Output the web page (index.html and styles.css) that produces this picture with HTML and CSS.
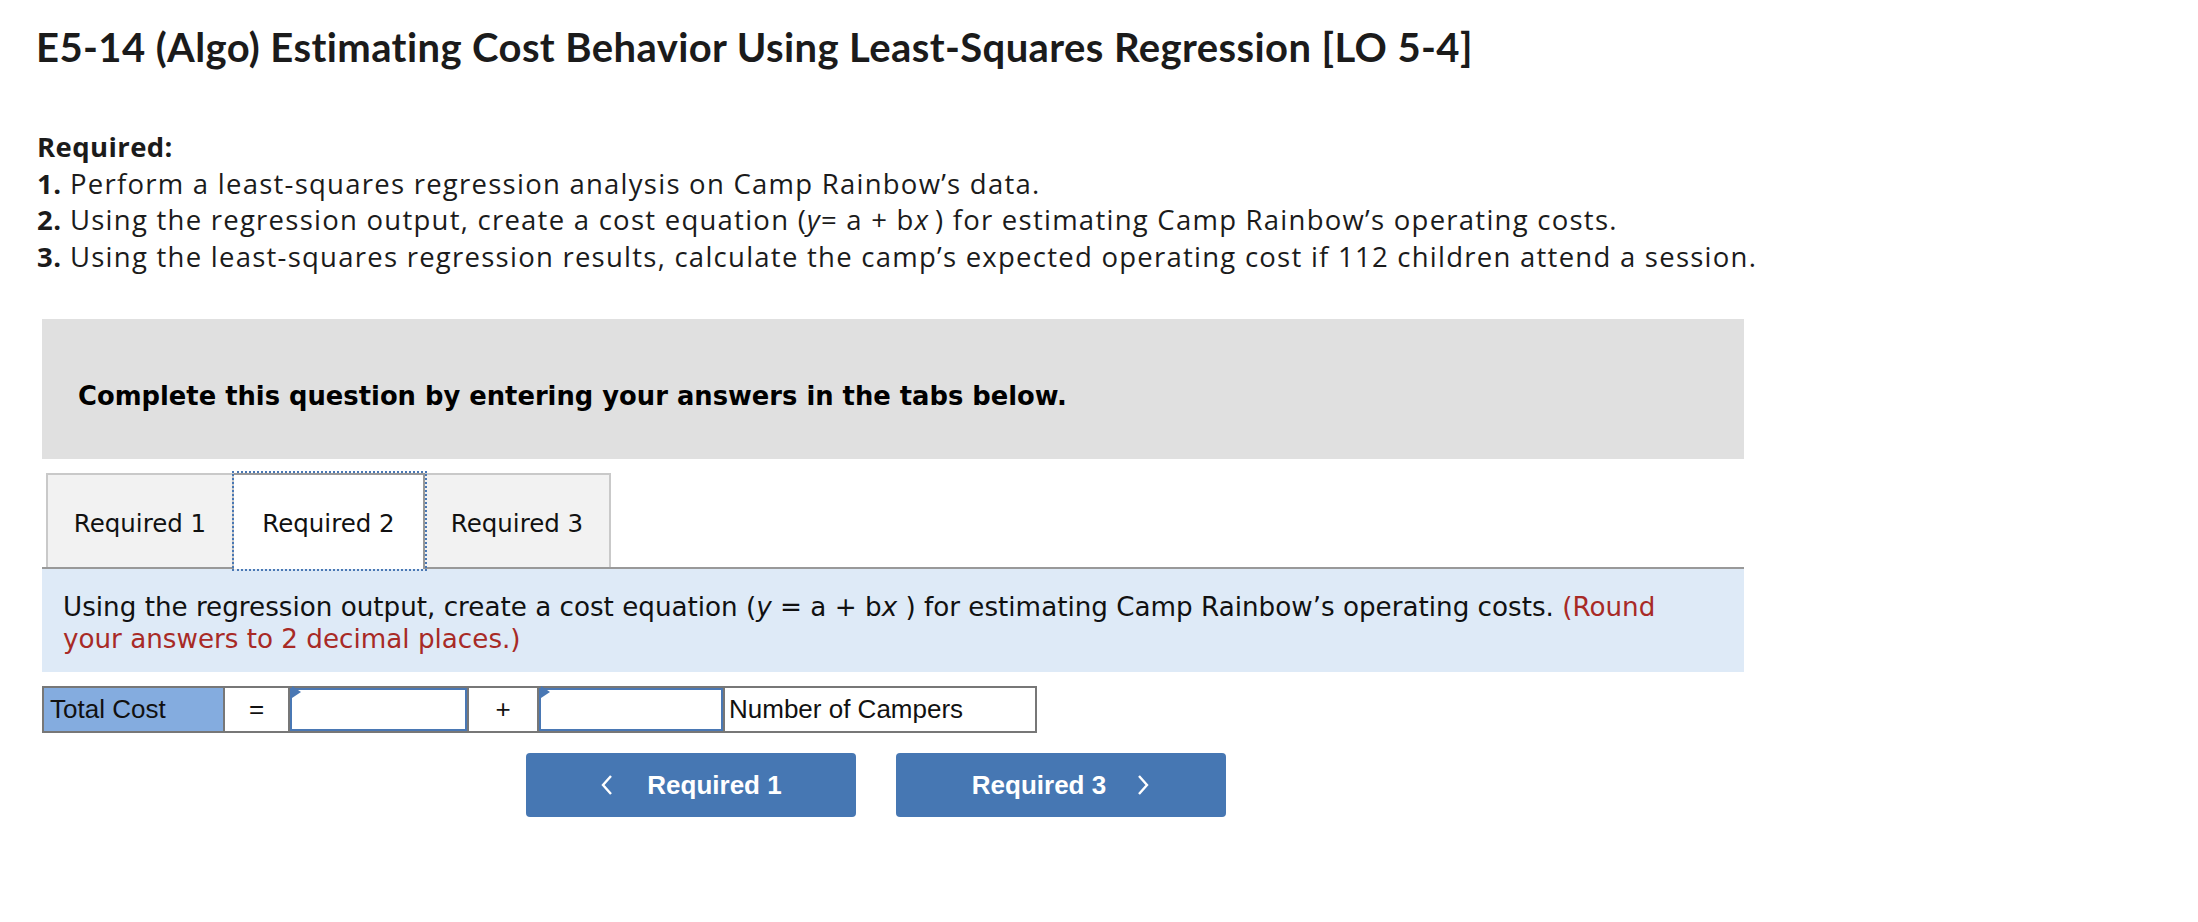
FILE: index.html
```html
<!DOCTYPE html>
<html lang="en">
<head>
<meta charset="utf-8">
<title>E5-14 (Algo) Estimating Cost Behavior Using Least-Squares Regression</title>
<link rel="stylesheet" href="styles.css">
</head>
<body>
<main class="page">
  <h1 class="title">E5-14 (Algo) Estimating Cost Behavior Using Least-Squares Regression [LO 5-4]</h1>

  <section class="intro">
    <p class="intro-head">Required:</p>
    <p><b>1.</b> Perform a least-squares regression analysis on Camp Rainbow’s data.</p>
    <p><b>2.</b> Using the regression output, create a cost equation (<i>y</i>= a + b<i>x</i>&#8201;) for estimating Camp Rainbow’s operating costs.</p>
    <p><b>3.</b> Using the least-squares regression results, calculate the camp’s expected operating cost if 112 children attend a session.</p>
  </section>

  <section class="question">
    <div class="notice">Complete this question by entering your answers in the tabs below.</div>

    <div class="tabs">
      <div class="tab">Required 1</div>
      <div class="tab tab-active">Required 2</div>
      <div class="tab">Required 3</div>
    </div>

    <div class="panel">
      Using the regression output, create a cost equation (<i>y</i> = a + b<i>x</i> ) for estimating Camp Rainbow’s operating costs. <span class="hint">(Round your answers to 2 decimal places.)</span>
    </div>

    <div class="equation">
      <div class="cell cell-label">Total Cost</div>
      <div class="cell cell-op">=</div>
      <div class="cell cell-input"><div class="input"><span class="flag"></span></div></div>
      <div class="cell cell-op cell-plus">+</div>
      <div class="cell cell-input cell-input2"><div class="input"><span class="flag"></span></div></div>
      <div class="cell cell-text">Number of Campers</div>
    </div>

    <div class="nav">
      <button class="nav-btn nav-prev">
        <svg class="chev" width="14" height="22" viewBox="0 0 14 22"><path d="M11 2 L3 11 L11 20" fill="none" stroke="#fff" stroke-width="2.4"/></svg>
        <span>Required 1</span>
      </button>
      <button class="nav-btn nav-next">
        <span>Required 3</span>
        <svg class="chev" width="14" height="22" viewBox="0 0 14 22"><path d="M3 2 L11 11 L3 20" fill="none" stroke="#fff" stroke-width="2.4"/></svg>
      </button>
    </div>
  </section>
</main>
</body>
</html>
```
FILE: styles.css
```css
html, body {
  margin: 0;
  padding: 0;
  background: #fff;
  color: #111;
}

.page {
  padding: 23px 0 0 36px;
}

.title {
  margin: 0;
  font-family: "Lato", "Liberation Sans", sans-serif;
  font-weight: 700;
  font-size: 40px;
  letter-spacing: 0.4px;
  line-height: 48px;
  color: #1b1b1b;
}

.intro {
  margin-top: 58px;
  padding-left: 1px;
  font-family: "Open Sans", "Liberation Sans", sans-serif;
  font-size: 27.5px;
  letter-spacing: 1.25px;
  line-height: 36.6px;
  color: #1b1b1b;
}

.intro p {
  margin: 0;
}

.intro b {
  font-weight: 700;
  letter-spacing: 0.5px;
}

.intro .intro-head {
  font-weight: 700;
  letter-spacing: 0.4px;
}

.question {
  margin-left: 6px;
  width: 1702px;
  margin-top: 44px;
}

.notice {
  height: 140px;
  box-sizing: border-box;
  background: #e0e0e0;
  padding: 61px 0 0 36px;
  font-family: "DejaVu Sans", Verdana, sans-serif;
  font-weight: 700;
  font-size: 25.8px;
  line-height: 32px;
  color: #000;
}

.tabs {
  display: flex;
  margin-top: 14px;
  padding-left: 4px;
  border-bottom: 2px solid #999;
}

.tab {
  width: 188px;
  height: 94px;
  box-sizing: border-box;
  display: flex;
  align-items: center;
  justify-content: center;
  padding-top: 4px;
  background: #f2f2f2;
  border: 2px solid #c9c9c9;
  border-bottom: none;
  font-family: "DejaVu Sans", Verdana, sans-serif;
  font-size: 24.5px;
  color: #111;
}

.tab + .tab {
  border-left: none;
}

.tab-active {
  width: 191px;
  background: #fff;
  border: 2px solid #999;
  border-bottom: none;
  outline: 2px dotted #4a78b4;
  outline-offset: 0px;
  position: relative;
  z-index: 1;
  margin-bottom: -2px;
  height: 96px;
  padding-bottom: 2px;
}

.tab-active + .tab {
  border-left: none;
  width: 186px;
}

.panel {
  background: #deeaf7;
  padding: 22px 40px 17px 21px;
  font-family: "DejaVu Sans", Verdana, sans-serif;
  font-size: 26.2px;
  line-height: 32px;
  color: #111;
}

.hint {
  color: #a82a26;
}

.equation {
  display: flex;
  width: 995px;
  height: 47px;
  box-sizing: border-box;
  margin-top: 14px;
  border: 2px solid #777;
  font-family: "Liberation Sans", Arial, sans-serif;
  font-size: 26px;
  color: #111;
}

.cell {
  display: flex;
  align-items: center;
  box-sizing: border-box;
  border-left: 2px solid #777;
  background: #fff;
}

.cell-label {
  border-left: none;
  width: 179px;
  padding-left: 6px;
  background: #84acdf;
}

.cell-op {
  width: 65px;
  justify-content: center;
}

.cell-plus {
  width: 70px;
}

.cell-input {
  width: 179px;
}

.cell-input2 {
  width: 186px;
}

.input {
  position: relative;
  width: 100%;
  height: 100%;
  box-sizing: border-box;
  border: 2px solid #4a78b4;
  background: #fff;
}

.flag {
  position: absolute;
  left: 0;
  top: 0;
  width: 0;
  height: 0;
  border-top: 6px solid transparent;
  border-bottom: 6px solid transparent;
  border-left: 9px solid #4a78b4;
  transform: translateY(-4px);
}

.cell-text {
  flex: 1;
  padding-left: 4px;
}

.nav {
  display: flex;
  gap: 40px;
  margin-top: 20px;
  padding-left: 484px;
}

.nav-btn {
  width: 330px;
  height: 64px;
  display: flex;
  align-items: center;
  justify-content: center;
  border: none;
  border-radius: 4px;
  background: #4677b3;
  color: #fff;
  font-family: "Liberation Sans", Arial, sans-serif;
  font-weight: 700;
  font-size: 26px;
  padding: 0;
}

.nav-prev {
  gap: 33px;
}

.nav-next {
  gap: 30px;
}

.chev {
  display: block;
}
```
